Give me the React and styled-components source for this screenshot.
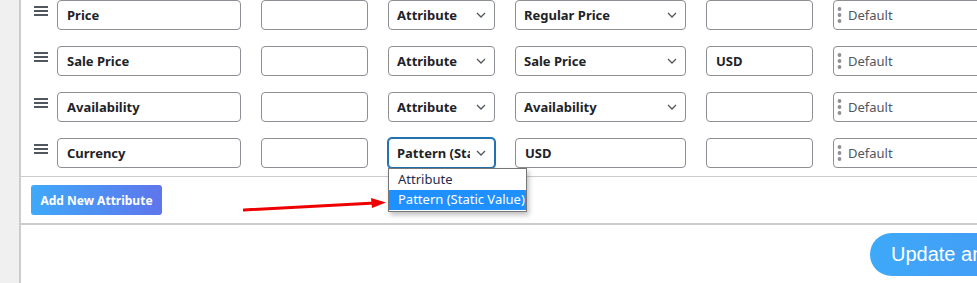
import React from 'react'
import styled, { createGlobalStyle, css } from 'styled-components'

const GlobalStyle = createGlobalStyle`
  html, body {
    margin: 0;
    padding: 0;
    background: #f0f0f1;
    overflow: hidden;
  }
  * { box-sizing: border-box; }
`

const rows = [
  { name: 'Price', prefix: '', type: 'Attribute', value: 'Regular Price', suffix: '' },
  { name: 'Sale Price', prefix: '', type: 'Attribute', value: 'Sale Price', suffix: 'USD' },
  { name: 'Availability', prefix: '', type: 'Attribute', value: 'Availability', suffix: '' },
  { name: 'Currency', prefix: '', type: 'Pattern (Static Value)', value: 'USD', suffix: '', open: true, pattern: true },
]

const Chevron = () => (
  <svg width="10" height="6" viewBox="0 0 10 6">
    <path d="M1 1 L5 5 L9 1" fill="none" stroke="#50575e" strokeWidth="1.3" />
  </svg>
)

const Handle = () => (
  <svg width="14" height="10" viewBox="0 0 14 10">
    <rect x="0" y="0" width="14" height="2" fill="#50575e" />
    <rect x="0" y="4" width="14" height="2" fill="#50575e" />
    <rect x="0" y="8" width="14" height="2" fill="#50575e" />
  </svg>
)

const Dots = () => (
  <svg width="5" height="18" viewBox="0 0 5 18">
    <circle cx="2.5" cy="3" r="1.9" fill="#8c8f94" />
    <circle cx="2.5" cy="9" r="1.9" fill="#8c8f94" />
    <circle cx="2.5" cy="15" r="1.9" fill="#8c8f94" />
  </svg>
)

const App = () => {
  return (
    <>
      <GlobalStyle />
      <Page>
        <Panel>
          <Rows>
            {rows.map((r) => (
              <Row key={r.name}>
                <HandleBox><Handle /></HandleBox>
                <Field width={184}>{r.name}</Field>
                <Field width={107}>{r.prefix}</Field>
                <SelectWrap>
                  <Select width={107} focused={r.open}>
                    <SelectText>{r.type}</SelectText>
                    <Chevron />
                  </Select>
                  {r.open && (
                    <Menu>
                      <MenuItem>Attribute</MenuItem>
                      <MenuItem active>Pattern (Static Value)</MenuItem>
                    </Menu>
                  )}
                </SelectWrap>
                {r.pattern ? (
                  <Field width={171}>{r.value}</Field>
                ) : (
                  <Select width={171}>
                    <SelectText>{r.value}</SelectText>
                    <Chevron />
                  </Select>
                )}
                <Field width={107}>{r.suffix}</Field>
                <OutputSelect>
                  <Dots />
                  <span>Default</span>
                </OutputSelect>
              </Row>
            ))}
          </Rows>
          <ActionBar>
            <AddButton>Add New Attribute</AddButton>
            <Arrow width="150" height="20" viewBox="0 0 150 20">
              <line x1="1" y1="15" x2="132" y2="8" stroke="#ee0000" strokeWidth="3" strokeLinecap="round" />
              <polygon points="128,3 143,7.5 129,13" fill="#ee0000" />
            </Arrow>
          </ActionBar>
          <Footer>
            <UpdateButton>Update and Generate Feed</UpdateButton>
          </Footer>
        </Panel>
      </Page>
    </>
  )
}

export default App

const Page = styled.div`
  height: 283px;
  padding-left: 19px;
  font-family: 'Noto Sans', 'Open Sans', sans-serif;
`

const Panel = styled.div`
  height: 100%;
  background: #fff;
  border-left: 2px solid #cccccc;
  position: relative;
`

const Rows = styled.div`
  display: flex;
  flex-direction: column;
  gap: 16px;
  padding: 0 0 8px 13px;
  border-bottom: 1px solid #cccccc;
`

const Row = styled.div`
  display: flex;
  align-items: flex-start;
  gap: 20px;
  height: 30px;
  white-space: nowrap;
`

const HandleBox = styled.div`
  width: 14px;
  margin-right: -11px;
  padding-top: 6px;
  display: flex;
`

const boxBase = css`
  height: 30px;
  border: 1px solid #8c8f94;
  border-radius: 4px;
  background: #fff;
  font-size: 13px;
  color: #1d2327;
  display: flex;
  align-items: center;
  flex-shrink: 0;
`

const Field = styled.div`
  ${boxBase}
  width: ${(p) => p.width}px;
  padding: 0 9px;
  font-weight: 700;
`

const SelectWrap = styled.div`
  position: relative;
`

const Select = styled.div`
  ${boxBase}
  width: ${(p) => p.width}px;
  padding: 0 8px 0 8px;
  font-weight: 700;
  justify-content: space-between;
  gap: 6px;
  ${(p) => p.focused && css`
    border-color: #2271b1;
    box-shadow: 0 0 0 1px #2271b1;
  `}
`

const SelectText = styled.span`
  overflow: hidden;
  flex: 1;
`

const Menu = styled.div`
  position: absolute;
  top: 30px;
  left: 0;
  width: 139px;
  background: #fff;
  border: 1px solid #767676;
  box-shadow: 2px 3px 5px rgba(0, 0, 0, 0.25);
  z-index: 5;
  padding: 1px 0;
`

const MenuItem = styled.div`
  height: 20px;
  line-height: 19px;
  padding: 0 9px;
  font-size: 13px;
  color: ${(p) => (p.active ? '#fff' : '#1d2b4f')};
  background: ${(p) => (p.active ? '#1e90ff' : 'transparent')};
  white-space: nowrap;
`

const OutputSelect = styled.div`
  ${boxBase}
  width: 170px;
  padding: 0 8px 0 3px;
  gap: 6px;
  span {
    color: #50575e;
    font-size: 13px;
  }
`

const ActionBar = styled.div`
  position: relative;
  padding: 8px 10px 8px 10px;
  border-bottom: 2px solid #cccccc;
`

const AddButton = styled.button`
  height: 30px;
  width: 131px;
  padding: 0;
  border: none;
  border-radius: 3px;
  background: linear-gradient(90deg, #3ea9f9 0%, #5f75ec 100%);
  color: #fff;
  font-family: 'Noto Sans', 'Open Sans', sans-serif;
  font-size: 12px;
  font-weight: 700;
  cursor: pointer;
`

const Arrow = styled.svg`
  position: absolute;
  left: 222px;
  top: 18px;
`

const Footer = styled.div`
  display: flex;
  padding: 8px 0 0 849px;
`

const UpdateButton = styled.button`
  height: 43px;
  padding: 0 21px;
  border: none;
  border-radius: 22px;
  background: linear-gradient(90deg, #3ea9f9 0%, #4a8ef0 100%);
  color: #fff;
  font-family: 'Liberation Sans', Arial, sans-serif;
  font-size: 20px;
  white-space: nowrap;
  flex-shrink: 0;
`
